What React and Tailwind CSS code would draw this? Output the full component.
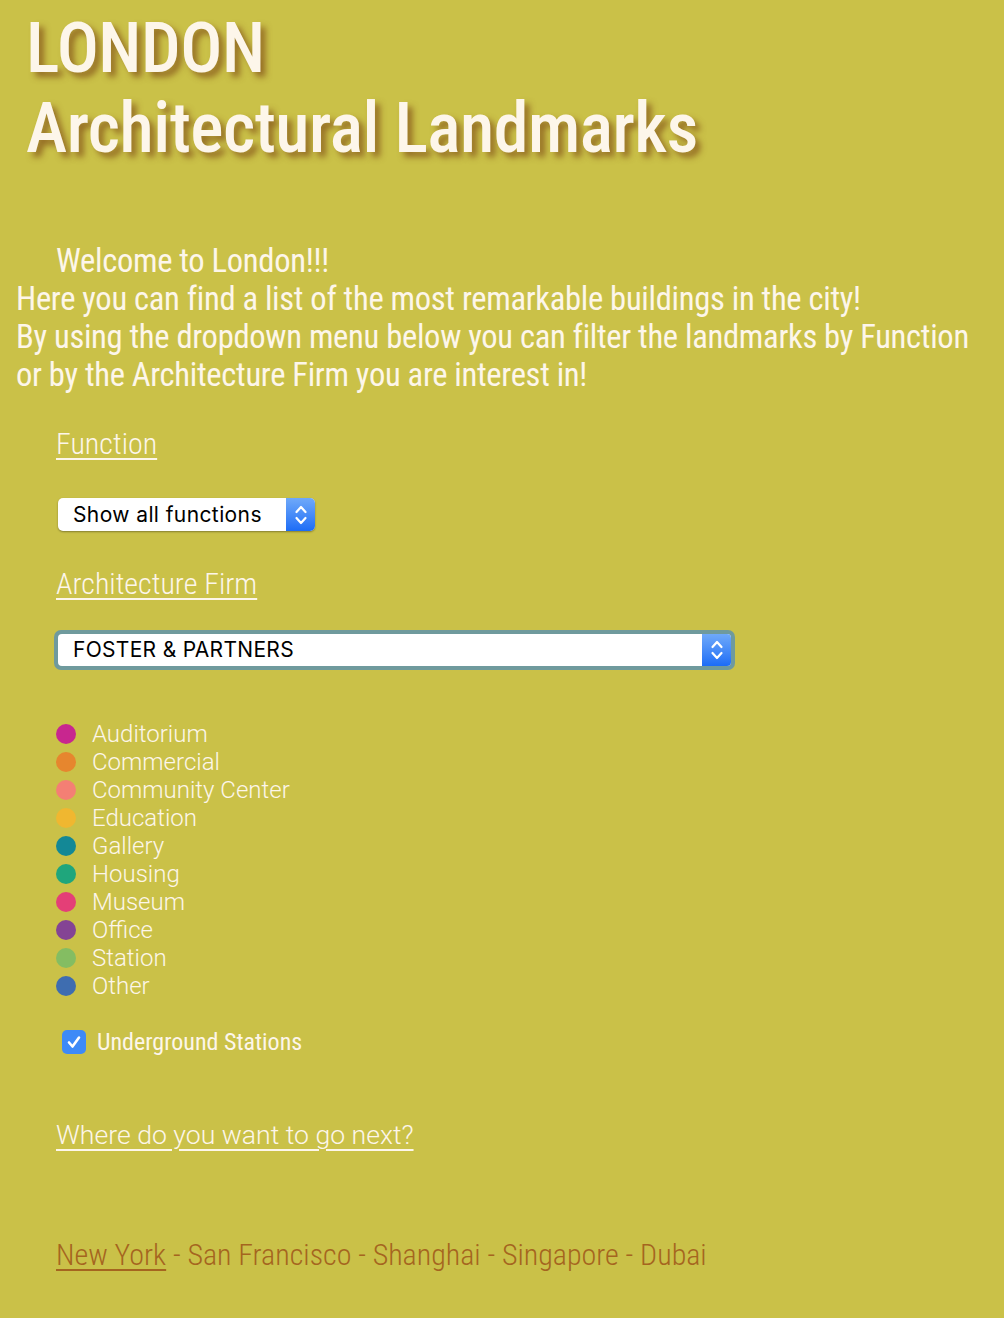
import React from "react";

const cats = [
  ["Auditorium", "#c8268f"],
  ["Commercial", "#e6862e"],
  ["Community Center", "#f47f74"],
  ["Education", "#f0b730"],
  ["Gallery", "#138896"],
  ["Housing", "#1fa67c"],
  ["Museum", "#e43f77"],
  ["Office", "#844494"],
  ["Station", "#84bd62"],
  ["Other", "#3e6db0"],
];

function Arrows({ className }) {
  return (
    <div className={"flex items-center justify-center bg-gradient-to-b from-[#6fa9f9] to-[#1b6cf6] " + className}>
      <svg width="14" height="24" viewBox="0 0 14 24" fill="none" stroke="white" strokeWidth="2.2" strokeLinecap="round" strokeLinejoin="round">
        <path d="M2.5 9 L7 4 L11.5 9" />
        <path d="M2.5 15 L7 20 L11.5 15" />
      </svg>
    </div>
  );
}

export default function App() {
  return (
    <div className="min-h-[1318px] bg-[#cac148] font-['Roboto',sans-serif] text-[#fdf6ea] overflow-hidden">
      <h1 className="pl-[26px] pt-[8px] text-[70px] leading-[80px] font-medium [font-stretch:condensed] [text-shadow:5px_5px_6px_rgba(140,95,30,0.85)] tracking-[-0.5px]">
        LONDON
        <br />
        Architectural Landmarks
      </h1>

      <p className="mt-[74px] px-[16px] text-[32.6px] leading-[38px] [font-stretch:condensed] indent-[40px] tracking-[-0.3px]">
        Welcome to London!!!
        <br />
        Here you can find a list of the most remarkable buildings in the city!
        <br />
        By using the dropdown menu below you can filter the landmarks by Function or by the Architecture Firm you are interest in!
      </p>

      <div className="pl-[56px]">
        <div className="mt-[34px] text-[30px] leading-[32px] font-light [font-stretch:condensed] underline underline-offset-[4px] decoration-[1.5px]">
          Function
        </div>

        <div className="mt-[38px] ml-[2px] flex h-[33px] w-[257px] rounded-[5px] bg-white shadow-[0_1px_2px_rgba(0,0,0,0.35)] overflow-hidden">
          <div className="flex-1 flex items-center pl-[15px] text-black text-[21px] font-['Inter',sans-serif] tracking-[0.4px]">
            Show all functions
          </div>
          <Arrows className="w-[29px]" />
        </div>

        <div className="mt-[37px] text-[30px] leading-[32px] font-light [font-stretch:condensed] underline underline-offset-[4px] decoration-[1.5px]">
          Architecture Firm
        </div>

        <div className="mt-[30px] -ml-[2px] w-[681px] rounded-[7px] bg-[#6f9a9d] p-[4px]">
          <div className="flex h-[32px] rounded-[4px] bg-white overflow-hidden">
            <div className="flex-1 flex items-center pl-[15px] text-black text-[21px] font-['Inter',sans-serif] tracking-[0.3px]">
              FOSTER &amp; PARTNERS
            </div>
            <Arrows className="w-[29px]" />
          </div>
        </div>

        <div className="mt-[50px] flex flex-col">
          {cats.map(([name, color]) => (
            <div key={name} className="flex items-center h-[28px]">
              <span className="w-[20px] h-[20px] rounded-full" style={{ backgroundColor: color }} />
              <span className="ml-[16px] text-[24px] font-light leading-[28px]">{name}</span>
            </div>
          ))}
        </div>

        <div className="mt-[28px] ml-[6px] flex items-center">
          <span className="w-[24px] h-[24px] rounded-[5px] bg-[#3d8af7] flex items-center justify-center">
            <svg width="18" height="18" viewBox="0 0 18 18" fill="none" stroke="white" strokeWidth="2.6" strokeLinecap="round" strokeLinejoin="round">
              <path d="M4 9.5 L7.5 13.5 L14 4.5" />
            </svg>
          </span>
          <span className="ml-[11px] text-[24px] leading-[28px] [font-stretch:condensed]">Underground Stations</span>
        </div>

        <div className="mt-[63px] text-[26.6px] leading-[32px] font-light underline underline-offset-[5px] decoration-[1.5px]">
          Where do you want to go next?
        </div>

        <div className="mt-[88px] text-[30px] leading-[32px] font-light [font-stretch:condensed] text-[#a5651f]">
          <span className="underline underline-offset-[4px] decoration-[1.5px]">New York</span> - San Francisco - Shanghai - Singapore - Dubai
        </div>
      </div>
    </div>
  );
}
